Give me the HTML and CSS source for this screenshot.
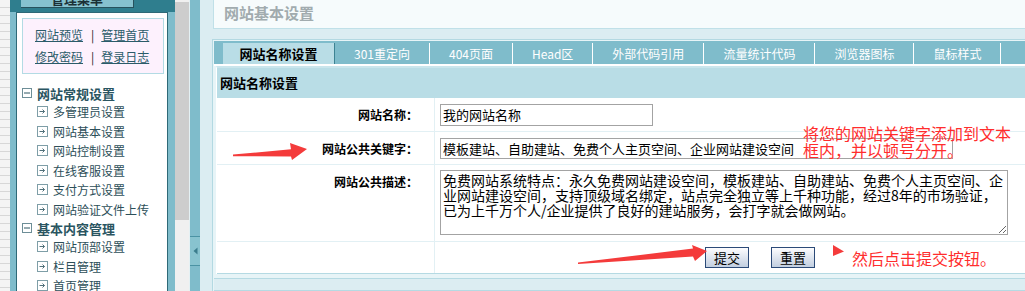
FILE: index.html
```html
<!DOCTYPE html>
<html lang="zh-cn">
<head>
    <meta charset="UTF-8">
    <meta name="viewport" content="width=device-width, initial-scale=1.0">
    <title>网站基本设置</title>
    <link rel="stylesheet" href="styles.css">
</head>
<body>
<div class="page">
    <div class="edge"></div>

    <div class="side">
        <div class="side-main">
            <div class="menu-top">
                <div class="menu-tab"><span>管理菜单</span></div>
            </div>
            <div class="menu-body">
                <div class="quick">
                    <p><a href="#">网站预览</a><span class="sep">|</span><a href="#">管理首页</a></p>
                    <p><a href="#">修改密码</a><span class="sep">|</span><a href="#">登录日志</a></p>
                </div>
                <ul class="tree">
                    <li class="group">
                        <svg width="10" height="10"><rect x="0.5" y="0.5" width="9" height="9" fill="#fff" stroke="#6d8e97"/><path d="M2 5h6" stroke="#2c5663"/></svg>
                        网站常规设置
                    </li>
                    <li class="item">
                        <svg width="11" height="11"><rect x="0.5" y="0.5" width="10" height="10" fill="#fff" stroke="#7e9ea7"/><path d="M2.5 5.5h5M5.5 3.5l2 2-2 2" stroke="#51707a" fill="none"/></svg>
                        多管理员设置
                    </li>
                    <li class="item">
                        <svg width="11" height="11"><rect x="0.5" y="0.5" width="10" height="10" fill="#fff" stroke="#7e9ea7"/><path d="M2.5 5.5h5M5.5 3.5l2 2-2 2" stroke="#51707a" fill="none"/></svg>
                        网站基本设置
                    </li>
                    <li class="item">
                        <svg width="11" height="11"><rect x="0.5" y="0.5" width="10" height="10" fill="#fff" stroke="#7e9ea7"/><path d="M2.5 5.5h5M5.5 3.5l2 2-2 2" stroke="#51707a" fill="none"/></svg>
                        网站控制设置
                    </li>
                    <li class="item">
                        <svg width="11" height="11"><rect x="0.5" y="0.5" width="10" height="10" fill="#fff" stroke="#7e9ea7"/><path d="M2.5 5.5h5M5.5 3.5l2 2-2 2" stroke="#51707a" fill="none"/></svg>
                        在线客服设置
                    </li>
                    <li class="item">
                        <svg width="11" height="11"><rect x="0.5" y="0.5" width="10" height="10" fill="#fff" stroke="#7e9ea7"/><path d="M2.5 5.5h5M5.5 3.5l2 2-2 2" stroke="#51707a" fill="none"/></svg>
                        支付方式设置
                    </li>
                    <li class="item">
                        <svg width="11" height="11"><rect x="0.5" y="0.5" width="10" height="10" fill="#fff" stroke="#7e9ea7"/><path d="M2.5 5.5h5M5.5 3.5l2 2-2 2" stroke="#51707a" fill="none"/></svg>
                        网站验证文件上传
                    </li>
                    <li class="group">
                        <svg width="10" height="10"><rect x="0.5" y="0.5" width="9" height="9" fill="#fff" stroke="#6d8e97"/><path d="M2 5h6" stroke="#2c5663"/></svg>
                        基本内容管理
                    </li>
                    <li class="item">
                        <svg width="11" height="11"><rect x="0.5" y="0.5" width="10" height="10" fill="#fff" stroke="#7e9ea7"/><path d="M2.5 5.5h5M5.5 3.5l2 2-2 2" stroke="#51707a" fill="none"/></svg>
                        网站顶部设置
                    </li>
                    <li class="item">
                        <svg width="11" height="11"><rect x="0.5" y="0.5" width="10" height="10" fill="#fff" stroke="#7e9ea7"/><path d="M2.5 5.5h5M5.5 3.5l2 2-2 2" stroke="#51707a" fill="none"/></svg>
                        栏目管理
                    </li>
                    <li class="item">
                        <svg width="11" height="11"><rect x="0.5" y="0.5" width="10" height="10" fill="#fff" stroke="#7e9ea7"/><path d="M2.5 5.5h5M5.5 3.5l2 2-2 2" stroke="#51707a" fill="none"/></svg>
                        首页管理
                    </li>
                </ul>
            </div>
        </div>
        <div class="scroll"><div class="thumb"></div></div>
        <div class="toggle">
            <div class="handle">
                <svg width="5" height="8"><path d="M4.5 0.5v7L0.5 4z" fill="#3b7d8d"/></svg>
            </div>
        </div>
    </div>

    <div class="main">
        <div class="title">网站基本设置</div>
        <div class="frame">
            <ul class="tabs">
                <li class="on">网站名称设置</li>
                <li>301重定向</li>
                <li>404页面</li>
                <li>Head区</li>
                <li>外部代码引用</li>
                <li>流量统计代码</li>
                <li>浏览器图标</li>
                <li>鼠标样式</li>
                <li class="last"></li>
            </ul>
            <div class="panel">
                <div class="panel-head">网站名称设置</div>
                <div class="row r1">
                    <div class="label">网站名称：</div>
                    <div class="field"><input type="text" class="txt short" value="我的网站名称"></div>
                </div>
                <div class="row r2">
                    <div class="label">网站公共关键字：</div>
                    <div class="field"><input type="text" class="txt long" value="模板建站、自助建站、免费个人主页空间、企业网站建设空间"></div>
                </div>
                <div class="row r3">
                    <div class="label">网站公共描述：</div>
                    <div class="field"><textarea class="desc" wrap="off">免费网站系统特点：永久免费网站建设空间，模板建站、自助建站、免费个人主页空间、企
业网站建设空间，支持顶级域名绑定，站点完全独立等上千种功能，经过8年的市场验证，
已为上千万个人/企业提供了良好的建站服务，会打字就会做网站。</textarea></div>
                </div>
                <div class="row r4">
                    <div class="label"></div>
                    <div class="field actions">
                        <button class="btn">提交</button>
                        <button class="btn">重置</button>
                        <svg class="pointer" width="12" height="12"><path d="M0 0v11l11-4.5z" fill="#f43b3b"/></svg>
                        <span class="hint">然后点击提交按钮。</span>
                    </div>
                </div>
            </div>
            <div class="frame-foot"></div>
        </div>
    </div>

    <!-- red notes drawn over the form -->
    <div class="note">将您的网站关键字添加到文本<br>框内，并以顿号分开。</div>
    <svg class="marks" width="1025" height="291">
        <polygon points="233,154.6 291,149.2 290,143 307,149 292,160 291,156.6 233,156.2" fill="#f43b3b"/>
        <polygon points="578,262.6 693,248.6 692,245 707,251 695,261 693,256.4 578,264" fill="#f43b3b"/>
    </svg>
</div>
</body>
</html>
```

FILE: styles.css
```css
* {
    box-sizing: border-box;
}

body {
    margin: 0;
    font-family: "Noto Sans CJK SC", "Liberation Sans", sans-serif;
    font-size: 12px;
    background-color: #dbedf2;
    overflow: hidden;
}

.page {
    position: relative;
    display: flex;
    height: 291px;
    overflow: hidden;
}

.edge {
    flex: none;
    width: 10px;
    background: repeating-linear-gradient(to bottom, #f4f4f4 0 7px, #d7d7d7 7px 8px);
}

/* left menu */
.side {
    flex: none;
    display: flex;
    width: 190px;
    background-color: #7fbccb;
}

.side-main {
    width: 165px;
}

.menu-top {
    height: 12px;
    padding-left: 11px;
    background-color: #2f7e8e;
}

.menu-tab {
    width: 113px;
    height: 8px;
    overflow: hidden;
    background-color: #86c2cf;
    border-right: 1px solid #27525d;
    border-bottom: 1px solid #27525d;
    text-align: center;
    font-size: 13px;
    font-weight: bold;
    line-height: 14px;
    color: #1b3036;
}

.menu-tab span {
    display: block;
    margin-top: -8px;
}

.menu-body {
    height: 279px;
    margin: 0 7px 0 6px;
    padding: 5px 0 0 5px;
    background-color: #fff;
    border-top: 1px solid #2e6977;
    border-left: 1px solid #2e6977;
    border-right: 1px solid #2e6977;
}

.quick {
    width: 142px;
    padding: 5px 0 5px 12px;
    background-color: #fdf1fd;
    border: 1px solid #b3dbe4;
    line-height: 22px;
}

.quick p {
    margin: 0;
}

.quick a {
    color: #2b5b69;
    text-decoration: underline;
}

.quick .sep {
    margin: 0 7px 0 8px;
    color: #222;
}

.tree {
    list-style: none;
    margin: 10px 0 0;
    padding: 0;
}

.tree .group {
    display: flex;
    align-items: center;
    gap: 5px;
    height: 18px;
    font-size: 13px;
    font-weight: bold;
    color: #2a5561;
}

.tree .item {
    display: flex;
    align-items: center;
    gap: 5px;
    height: 19.5px;
    padding-left: 15px;
    color: #2d4f59;
}

.tree svg {
    flex: none;
}

.scroll {
    width: 15px;
    padding-top: 2px;
    background-color: #f0f0f0;
    border-right: 1px solid #e4f1f4;
}

.thumb {
    height: 218px;
    background-color: #cdcdcd;
}

.toggle {
    width: 10px;
}

.handle {
    display: flex;
    align-items: center;
    justify-content: center;
    height: 30px;
    margin-top: 236px;
    background-color: #88c3cf;
    border-top: 1px solid #4b93a4;
    border-bottom: 1px solid #4b93a4;
}

/* main area */
.main {
    flex: 1;
    min-width: 0;
    padding-left: 12px;
    overflow: hidden;
}

.title {
    height: 29px;
    margin: 0 -10px 0 1px;
    padding-left: 10px;
    background-color: #f6fbfc;
    border-left: 1px solid #c0e0e8;
    border-bottom: 1px solid #c0e0e8;
    font-size: 15px;
    font-weight: bold;
    line-height: 26px;
    color: #a1abae;
}

.frame {
    margin: 10px -10px 0 0;
    padding: 1px 0 0 1px;
    background-color: #e7f4f7;
    border-top: 1px solid #b3d9e2;
    border-left: 1px solid #b3d9e2;
}

.tabs {
    display: flex;
    height: 25px;
    margin: 0;
    padding: 2px 0 0 9px;
    list-style: none;
    background-color: #7fbccb;
    border-bottom: 2px solid #fff;
}

.tabs li {
    flex: none;
    height: 21px;
    padding: 0 19px;
    border-right: 1px solid #fff;
    line-height: 21px;
    color: #fff;
    white-space: nowrap;
}

.tabs li.on {
    width: 112px;
    padding: 0;
    background-color: #b9dde6;
    border-right-color: #3d8393;
    text-align: center;
    font-size: 13px;
    font-weight: bold;
    color: #000;
}

.tabs li.last {
    border-right: none;
}

.panel {
    margin-left: 2px;
    background-color: #fff;
    border-top: 2px solid #c9e5ec;
    border-left: 1px solid #fff;
}

.panel-head {
    height: 30px;
    padding-left: 3px;
    background-color: #b9dde6;
    font-size: 13px;
    font-weight: bold;
    line-height: 30px;
    color: #000;
}

.row {
    display: grid;
    grid-template-columns: 218px 1fr;
    border-bottom: 1px solid #e2f0f4;
}

.row.r1 { height: 34px; }
.row.r2 { height: 33px; }
.row.r3 { height: 77px; }
.row.r4 { height: 32px; border-bottom-color: #b5dae3; }

.label {
    display: flex;
    align-items: center;
    justify-content: flex-end;
    padding-right: 16px;
    border-right: 1px solid #e2f0f4;
    font-weight: bold;
    color: #000;
}

.r3 .label {
    align-items: flex-start;
    padding-top: 8px;
    line-height: 18px;
}

.field {
    display: flex;
    align-items: center;
    padding-left: 5px;
}

.r3 .field {
    align-items: flex-start;
    padding-top: 5px;
}

.txt {
    padding: 0 2px;
    border: 1px solid #a3a3a3;
    font-family: inherit;
    font-size: 13px;
    color: #000;
    outline: none;
}

.txt.short {
    width: 213px;
    height: 22px;
}

.txt.long {
    width: 513px;
    height: 21px;
}

.desc {
    width: 568px;
    height: 65px;
    padding: 2px 2px;
    border: 1px solid #a3a3a3;
    font-family: inherit;
    font-size: 14px;
    line-height: 15px;
    color: #000;
    overflow: auto;
    white-space: pre;
    outline: none;
}

.actions {
    padding-left: 270px;
}

.btn {
    width: 44px;
    height: 21px;
    margin-right: 22px;
    padding: 0;
    background: linear-gradient(#fdfdfe, #c2cfe1);
    border: 1px solid #2b4a78;
    font-family: inherit;
    font-size: 13px;
    line-height: 19px;
    color: #000;
}

.btn + .btn {
    margin-right: 18px;
}

.pointer {
    align-self: flex-start;
    margin-top: 3px;
}

.hint {
    margin-left: 7px;
    font-size: 16px;
    color: #ff2d2d;
}

.frame-foot {
    height: 13px;
    margin-top: 4px;
    background-color: #dcedf2;
    border-top: 1px solid #b5dae3;
    border-bottom: 1px solid #b5dae3;
}

/* annotations */
.note {
    position: absolute;
    left: 803px;
    top: 125px;
    font-size: 16px;
    line-height: 17px;
    color: #ff2d2d;
}

.marks {
    position: absolute;
    left: 0;
    top: 0;
    pointer-events: none;
}
```
